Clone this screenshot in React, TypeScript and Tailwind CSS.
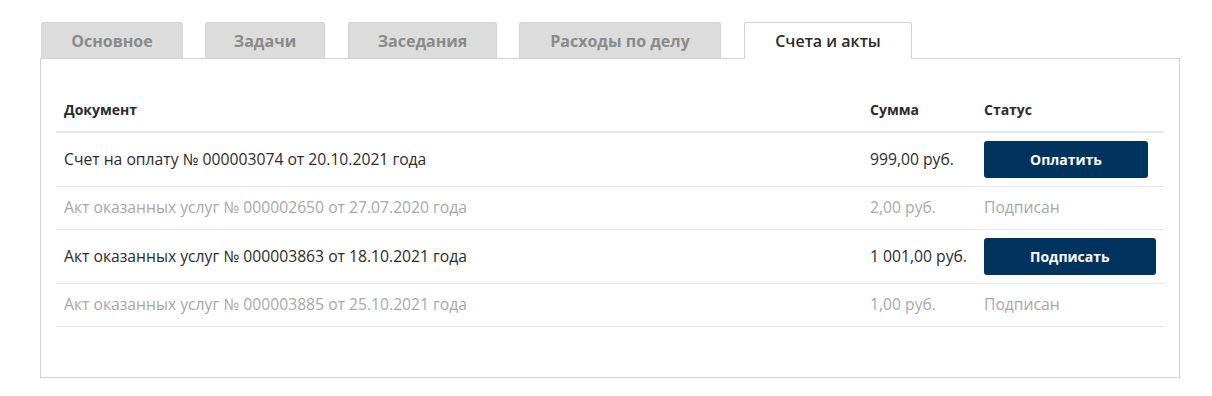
const tabs = [
  { label: 'Основное', cls: 'w-[142px]' },
  { label: 'Задачи', cls: 'w-[120px] ml-[22px]' },
  { label: 'Заседания', cls: 'w-[149px] ml-[23px]' },
  { label: 'Расходы по делу', cls: 'w-[202px] ml-[22px]' },
];

const rows = [
  { doc: 'Счет на оплату № 000003074 от 20.10.2021 года', sum: '999,00 руб.', action: 'Оплатить', muted: false },
  { doc: 'Акт оказанных услуг № 000002650 от 27.07.2020 года', sum: '2,00 руб.', status: 'Подписан', muted: true },
  { doc: 'Акт оказанных услуг № 000003863 от 18.10.2021 года', sum: '1 001,00 руб.', action: 'Подписать', muted: false },
  { doc: 'Акт оказанных услуг № 000003885 от 25.10.2021 года', sum: '1,00 руб.', status: 'Подписан', muted: true },
];

export default function App() {
  return (
    <div className="min-h-screen bg-white pt-[21px] px-[40px]" style={{ fontFamily: '"Open Sans", "Noto Sans", sans-serif' }}>
      <div className="w-[1140px]">
        {/* Tabs */}
        <div className="flex items-end pl-px h-[37px]">
          {tabs.map((t) => (
            <div
              key={t.label}
              className={`h-[36px] flex items-center justify-center rounded-t-[3px] bg-[#dcdcdc] border border-b-0 border-[#d2d2d2] text-[16px] font-bold text-[#8a8a8a] ${t.cls}`}
            >
              {t.label}
            </div>
          ))}
          <div className="relative -mb-px ml-[23px] w-[168px] h-[37px] flex items-center justify-center rounded-t-[3px] bg-white border border-b-0 border-[#d0d0d0] text-[16px] font-semibold text-[#2b2b2b]">
            Счета и акты
          </div>
        </div>

        {/* Panel */}
        <div className="border border-[#d0d0d0] px-[15px] pt-[28px] pb-[50px]">
          <div className="flex h-[46px] items-center border-b-2 border-[#e8e8e8] text-[14px] font-bold text-[#2b2b2b]">
            <div className="flex-1 pl-[8px]">Документ</div>
            <div className="w-[114px]">Сумма</div>
            <div className="w-[180px]">Статус</div>
          </div>
          {rows.map((r) => (
            <div
              key={r.doc}
              className={`flex items-center border-b border-[#e8e8e8] text-[15.7px] ${r.action ? 'h-[54px] text-[#2b2b2b]' : 'h-[43px] text-[#a8a8a8]'}`}
            >
              <div className="flex-1 pl-[8px]">{r.doc}</div>
              <div className="w-[114px]">{r.sum}</div>
              <div className="w-[180px]">
                {r.action ? (
                  <button className="h-[37px] px-[46px] rounded-[3px] bg-[#00345f] text-white text-[14px] font-bold">
                    {r.action}
                  </button>
                ) : (
                  r.status
                )}
              </div>
            </div>
          ))}
        </div>
      </div>
    </div>
  );
}
